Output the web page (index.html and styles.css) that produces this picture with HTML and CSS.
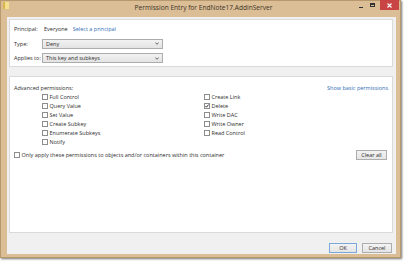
FILE: index.html
```html
<!DOCTYPE html>
<html lang="en">
<head>
    <meta charset="UTF-8">
    <title>Permission Entry for EndNote17.AddinServer</title>
    <link rel="stylesheet" href="styles.css">
</head>
<body>
    <div class="window">
        <div class="titlebar">
            <div class="title-left">
                <svg class="app-icon" width="6" height="7" viewBox="0 0 6 7">
                    <rect x="0" y="0" width="6" height="7" fill="#f3df8c"/>
                    <rect x="0" y="0" width="2" height="7" fill="#d9b64e"/>
                </svg>
            </div>
            <div class="title">Permission Entry for EndNote17.AddinServer</div>
            <div class="controls">
                <span class="ctl-min"></span>
                <span class="ctl-max"></span>
                <span class="ctl-close">
                    <svg width="5" height="5" viewBox="0 0 5 5">
                        <path d="M0.5 0.5 L4.5 4.5 M4.5 0.5 L0.5 4.5" stroke="#fff" stroke-width="1.1"/>
                    </svg>
                </span>
            </div>
        </div>

        <div class="content">
            <div class="panel top-panel">
                <div class="row">
                    <span class="label">Principal:</span>
                    <span class="value">Everyone</span>
                    <a class="link">Select a principal</a>
                </div>
                <div class="row">
                    <span class="label">Type:</span>
                    <div class="select">
                        <span>Deny</span>
                        <svg width="4" height="3" viewBox="0 0 4 3"><path d="M0.3 0.5 L2 2.3 L3.7 0.5" fill="none" stroke="#444" stroke-width="0.8"/></svg>
                    </div>
                </div>
                <div class="row">
                    <span class="label">Applies to:</span>
                    <div class="select">
                        <span>This key and subkeys</span>
                        <svg width="4" height="3" viewBox="0 0 4 3"><path d="M0.3 0.5 L2 2.3 L3.7 0.5" fill="none" stroke="#444" stroke-width="0.8"/></svg>
                    </div>
                </div>
            </div>

            <div class="panel main-panel">
                <div class="perm-head">
                    <span>Advanced permissions:</span>
                    <a class="link">Show basic permissions</a>
                </div>
                <div class="perm-grid">
                    <div class="perm-col">
                        <div class="check"><span class="box"></span>Full Control</div>
                        <div class="check"><span class="box"></span>Query Value</div>
                        <div class="check"><span class="box"></span>Set Value</div>
                        <div class="check"><span class="box"></span>Create Subkey</div>
                        <div class="check"><span class="box"></span>Enumerate Subkeys</div>
                        <div class="check"><span class="box"></span>Notify</div>
                    </div>
                    <div class="perm-col">
                        <div class="check"><span class="box"></span>Create Link</div>
                        <div class="check">
                            <span class="box checked">
                                <svg width="4" height="4" viewBox="0 0 4 4"><path d="M0.4 2 L1.5 3.2 L3.6 0.5" fill="none" stroke="#222" stroke-width="0.9"/></svg>
                            </span>Delete
                        </div>
                        <div class="check"><span class="box"></span>Write DAC</div>
                        <div class="check"><span class="box"></span>Write Owner</div>
                        <div class="check"><span class="box"></span>Read Control</div>
                    </div>
                </div>
                <div class="apply-row">
                    <div class="check"><span class="box"></span>Only apply these permissions to objects and/or containers within this container</div>
                    <button class="btn">Clear all</button>
                </div>
            </div>

            <div class="footer">
                <button class="btn btn-ok">OK</button>
                <button class="btn btn-cancel">Cancel</button>
            </div>
        </div>
    </div>
</body>
</html>
```

FILE: styles.css
```css
* {
    margin: 0;
    padding: 0;
    box-sizing: border-box;
    font-family: 'Open Sans', sans-serif;
}

body {
    background: #ffffff;
    width: 404px;
    height: 262px;
    overflow: hidden;
}

.window {
    width: 401px;
    height: 258px;
    background: #dbbe95;
    padding: 0 5px 4px 7px;
    box-shadow: inset 0 0 0 1px #b8996e, 1px 1px 2px rgba(0, 0, 0, 0.55);
    display: flex;
    flex-direction: column;
}

.titlebar {
    height: 17px;
    display: grid;
    grid-template-columns: 1fr auto 1fr;
    align-items: start;
}

.title-left {
    padding-top: 2px;
    margin-left: -4px;
}

.app-icon {
    display: block;
}

.title {
    font-size: 6.6px;
    color: #3c3328;
    line-height: 16px;
    margin-left: 4px;
}

.controls {
    justify-self: end;
    display: flex;
    align-items: flex-start;
    margin-right: -3px;
}

.ctl-min {
    width: 4px;
    height: 1px;
    background: #333;
    margin-top: 7px;
    margin-right: 7px;
}

.ctl-max {
    width: 5px;
    height: 4px;
    border: 1px solid #333;
    border-top-width: 2px;
    margin-top: 3px;
    margin-right: 5px;
}

.ctl-close {
    width: 19px;
    height: 10px;
    background: #c94545;
    display: flex;
    align-items: center;
    justify-content: center;
}

.content {
    flex: 1;
    background: #f0f0f0;
    display: flex;
    flex-direction: column;
    padding: 2px 3px 0 2px;
    font-size: 5.5px;
    color: #2e2e2e;
}

.panel {
    background: #ffffff;
    border: 1px solid #dadada;
}

.top-panel {
    height: 48px;
    padding: 4px 4px 0 4px;
    display: flex;
    flex-direction: column;
    gap: 4.5px;
}

.row {
    height: 10px;
    display: flex;
    align-items: center;
}

.label {
    width: 28px;
}

.value {
    margin-left: 2px;
    margin-right: 5px;
}

.link {
    color: #2f6db5;
}

.select {
    width: 121px;
    height: 10px;
    background: linear-gradient(#f2f2f2, #e3e3e3);
    border: 1px solid #acacac;
    display: flex;
    align-items: center;
    justify-content: space-between;
    padding: 0 3px 0 3px;
}

.main-panel {
    flex: 1;
    margin-top: 9px;
    padding: 7px 4px 0 4px;
}

.perm-head {
    height: 8px;
    display: flex;
    justify-content: space-between;
    align-items: center;
}

.perm-grid {
    display: grid;
    grid-template-columns: 162px 1fr;
    margin-left: 28px;
}

.check {
    height: 9px;
    display: flex;
    align-items: center;
}

.box {
    width: 6px;
    height: 6px;
    border: 1px solid #8d8d8d;
    background: #ffffff;
    margin-right: 1.5px;
    display: flex;
    align-items: center;
    justify-content: center;
}

.apply-row {
    height: 11px;
    margin-top: 3px;
    display: flex;
    justify-content: space-between;
    align-items: center;
}

.btn {
    font-family: 'Open Sans', sans-serif;
    font-size: 5.5px;
    color: #2e2e2e;
    height: 10px;
    background: linear-gradient(#f3f3f3, #e5e5e5);
    border: 1px solid #adadad;
    display: flex;
    align-items: center;
    justify-content: center;
}

.apply-row .btn {
    width: 31px;
    margin-right: 1px;
}

.footer {
    height: 21px;
    display: flex;
    justify-content: flex-end;
    align-items: flex-start;
    gap: 5px;
    padding: 10px 1px 0 0;
}

.btn-ok {
    width: 28px;
    border-color: #7aa7d8;
}

.btn-cancel {
    width: 30px;
}
```
